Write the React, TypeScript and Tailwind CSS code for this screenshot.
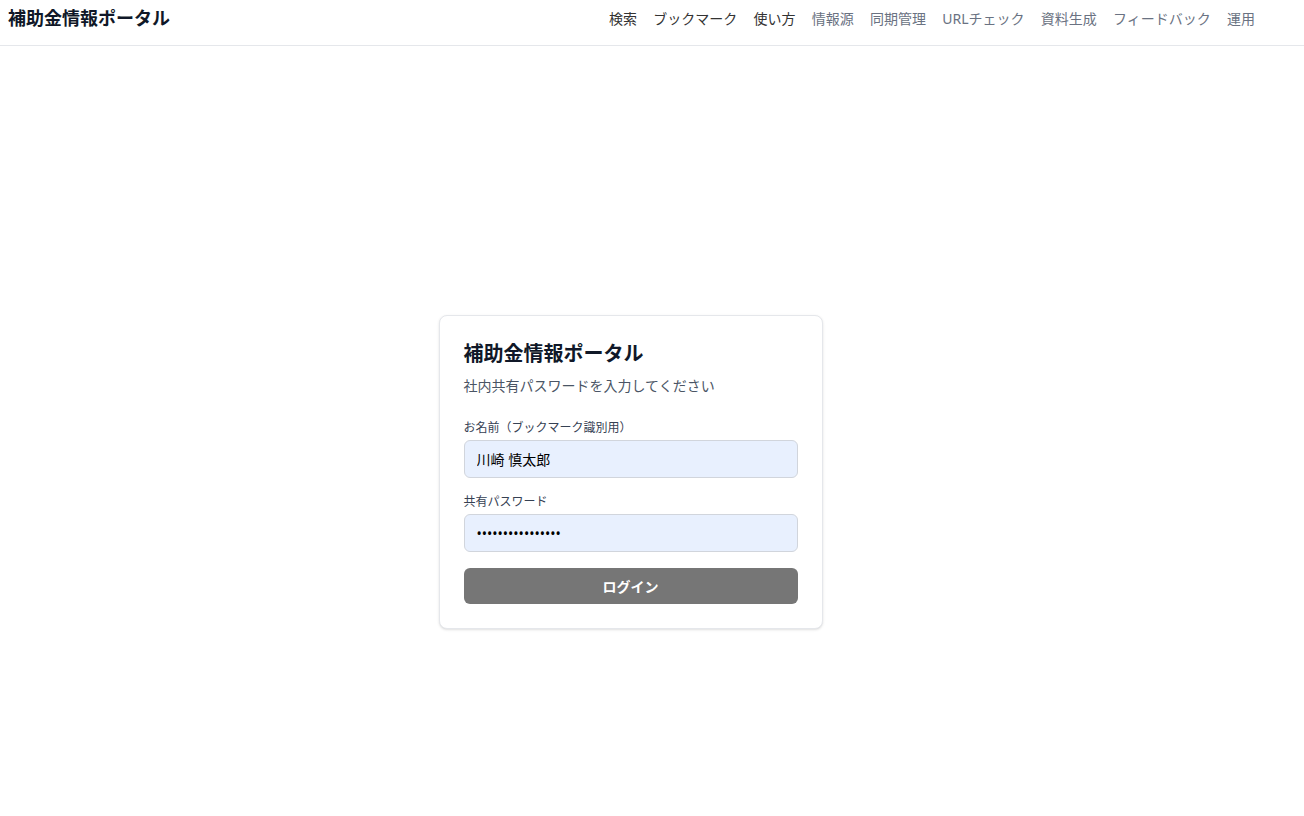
import React, { useState } from 'react';

const navItems = [
  { label: '検索', dark: true },
  { label: 'ブックマーク', dark: true },
  { label: '使い方', dark: true },
  { label: '情報源', dark: false },
  { label: '同期管理', dark: false },
  { label: 'URLチェック', dark: false },
  { label: '資料生成', dark: false },
  { label: 'フィードバック', dark: false },
  { label: '運用', dark: false },
];

const font = { fontFamily: '"Noto Sans", "Noto Sans CJK JP", sans-serif' };

export default function App() {
  const [name, setName] = useState('川崎 慎太郎');
  const [password, setPassword] = useState('sharedpassword12');

  return (
    <div className="min-h-screen bg-white text-gray-900" style={font}>
      {/* Header */}
      <header className="h-[46px] border-b border-gray-200 flex items-center justify-between pl-2 pr-[49px]">
        <div className="text-[18px] font-bold text-gray-900 -mt-[9px]">補助金情報ポータル</div>
        <nav className="flex items-center gap-[16.25px] -mt-[8px]">
          {navItems.map((item) => (
            <a
              key={item.label}
              href="#"
              className={`text-[14px] ${item.dark ? 'text-[#333333]' : 'text-gray-500'}`}
            >
              {item.label}
            </a>
          ))}
        </nav>
      </header>

      {/* Login card */}
      <main className="flex justify-center pt-[269px] pr-[43px]">
        <div className="w-[384px] bg-white border border-gray-200 rounded-lg shadow-sm px-6 pt-6 pb-6">
          <h1 className="text-[20px] font-bold text-gray-900 leading-7">補助金情報ポータル</h1>
          <p className="mt-[7px] text-[14px] text-gray-600">社内共有パスワードを入力してください</p>

          <form className="mt-6" onSubmit={(e) => e.preventDefault()}>
            <label className="block text-[12px] leading-4 text-gray-700 mb-1">お名前（ブックマーク識別用）</label>
            <input
              type="text"
              value={name}
              onChange={(e) => setName(e.target.value)}
              className="w-full h-[38px] rounded-md border border-gray-300 bg-[#e8f0fe] px-3 text-[14px] text-black outline-none"
            />

            <label className="block text-[12px] leading-4 text-gray-700 mt-4 mb-1">共有パスワード</label>
            <input
              type="password"
              value={password}
              onChange={(e) => setPassword(e.target.value)}
              className="w-full h-[38px] rounded-md border border-gray-300 bg-[#e8f0fe] px-3 text-[14px] text-black outline-none"
            />

            <button
              type="submit"
              className="mt-4 w-full h-[36px] rounded-md bg-[#767676] text-white text-[14px] font-bold"
            >
              ログイン
            </button>
          </form>
        </div>
      </main>
    </div>
  );
}
